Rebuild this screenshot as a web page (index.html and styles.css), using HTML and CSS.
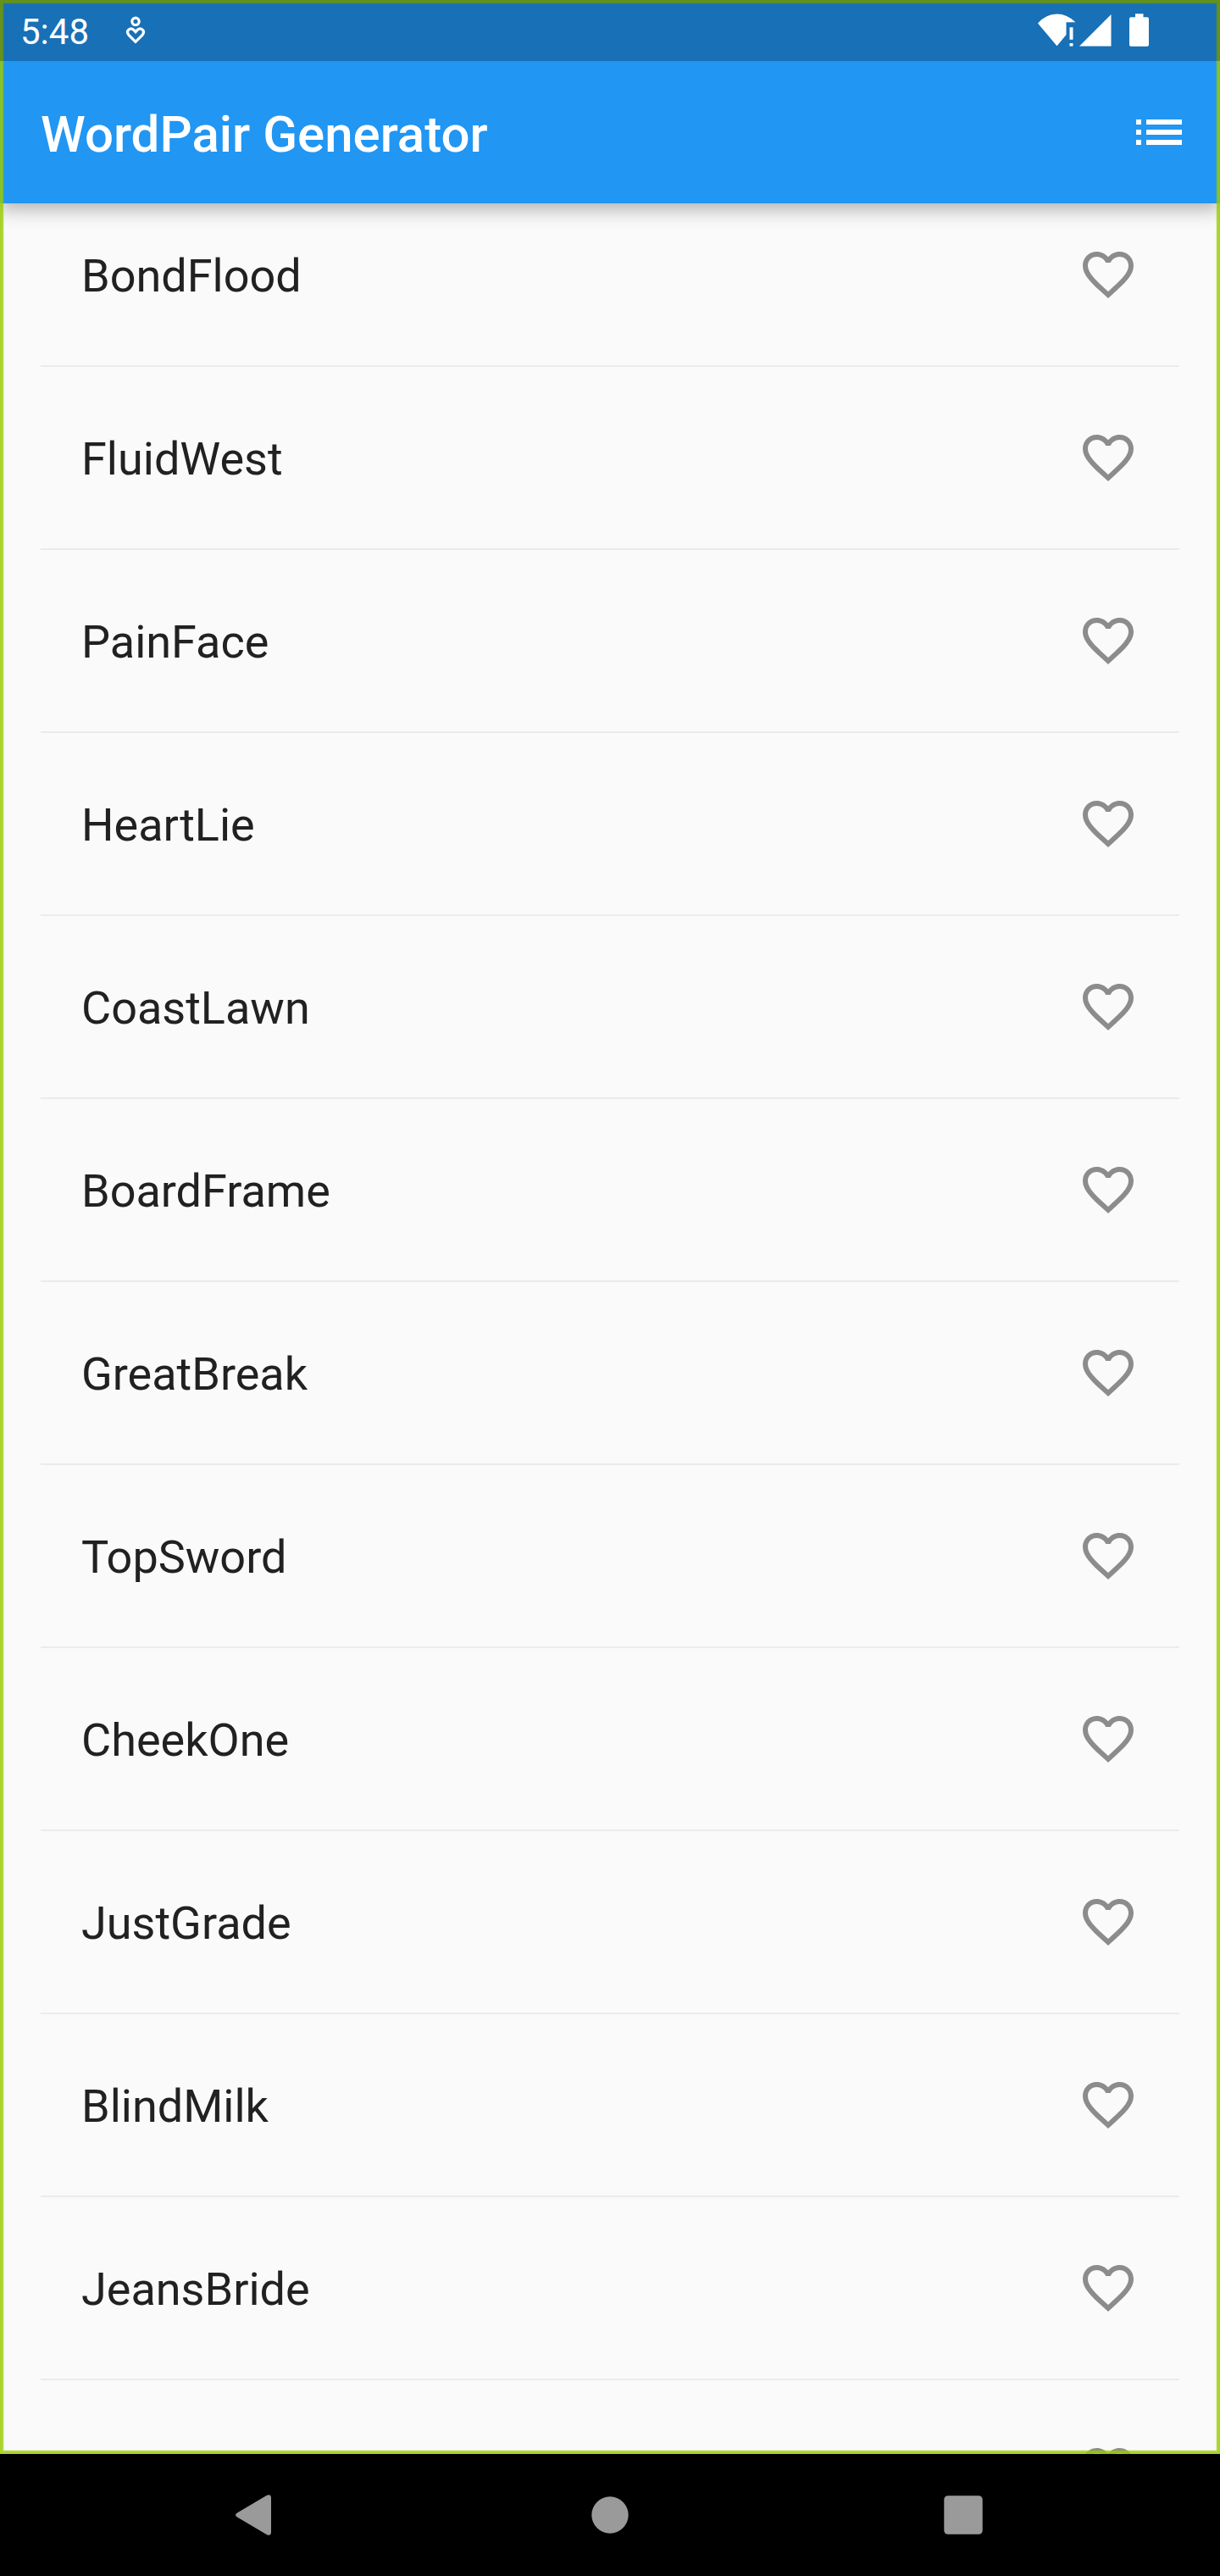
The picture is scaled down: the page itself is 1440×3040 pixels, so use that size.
FILE: index.html
```html
<!DOCTYPE html>
<html lang="en">
<head>
<meta charset="utf-8">
<title>WordPair Generator</title>
<link rel="stylesheet" href="styles.css">
</head>
<body>
<svg class="sprite" aria-hidden="true">
  <symbol id="heart" viewBox="0 0 24 24"><path d="M16.5 3c-1.74 0-3.41.81-4.5 2.09C10.91 3.81 9.24 3 7.5 3 4.42 3 2 5.42 2 8.5c0 3.78 3.4 6.86 8.55 11.54L12 21.35l1.45-1.32C18.6 15.36 22 12.28 22 8.5 22 5.42 19.58 3 16.5 3zm-4.4 15.55l-.1.1-.1-.1C7.14 14.24 4 11.39 4 8.5 4 6.5 5.5 5 7.5 5c1.54 0 3.04.99 3.57 2.36h1.87C13.46 5.99 14.96 5 16.5 5c2 0 3.5 1.5 3.5 3.5 0 2.89-3.14 5.74-7.9 10.05z"/></symbol>
</svg>
<div class="phone">
  <div class="screen">
    <header class="app-header">
      <div class="status-bar">
        <span class="clock">5:48</span>
        <svg class="notice" width="24" height="36" viewBox="0 0 24 36" fill="none" stroke="#fff" stroke-width="3.2"><circle cx="12" cy="7.300" r="4.200"/><path d="M12 31.300L4 23.300C0 18.500 5.500 13.800 9.800 17.300L12 19.600L14.200 17.300C18.500 13.800 24 18.500 20 23.300Z"/></svg>
        <div class="indicators">
          <svg class="wifi" width="45" height="40" viewBox="0 0 45 40" fill="#fff"><path d="M0 11.500Q9.500 .5 22.500 .5Q34.500 .5 44.500 10.300H33.500V25L22.500 38.300Z"/><path d="M37.500 16.300h4v14.400h-4zM37.500 35h4v3.500h-4z"/></svg>
          <svg class="signal" width="38" height="40" viewBox="0 0 38 40" fill="#fff"><path d="M0 38.500L37.500 1V38.500Z"/></svg>
          <svg class="battery" width="23" height="40" viewBox="0 0 23 40" fill="#fff"><path d="M7 .3h9.500v4H21q2 0 2 2V36.700q0 2-2 2H2q-2 0-2-2V6.300q0-2 2-2h5z"/></svg>
        </div>
      </div>
      <div class="app-bar">
        <h1>WordPair Generator</h1>
        <svg width="72" height="72" viewBox="0 0 24 24" fill="#fff"><path d="M3 13h2v-2H3v2zm0 4h2v-2H3v2zm0-8h2V7H3v2zm4 4h14v-2H7v2zm0 4h14v-2H7v2zM7 7v2h14V7H7z"/></svg>
      </div>
    </header>
    <ul class="pairs">
      <li><span>BondFlood</span><svg><use href="#heart"/></svg></li>
      <li><span>FluidWest</span><svg><use href="#heart"/></svg></li>
      <li><span>PainFace</span><svg><use href="#heart"/></svg></li>
      <li><span>HeartLie</span><svg><use href="#heart"/></svg></li>
      <li><span>CoastLawn</span><svg><use href="#heart"/></svg></li>
      <li><span>BoardFrame</span><svg><use href="#heart"/></svg></li>
      <li><span>GreatBreak</span><svg><use href="#heart"/></svg></li>
      <li><span>TopSword</span><svg><use href="#heart"/></svg></li>
      <li><span>CheekOne</span><svg><use href="#heart"/></svg></li>
      <li><span>JustGrade</span><svg><use href="#heart"/></svg></li>
      <li><span>BlindMilk</span><svg><use href="#heart"/></svg></li>
      <li><span>JeansBride</span><svg><use href="#heart"/></svg></li>
      <li><span></span><svg><use href="#heart"/></svg></li>
    </ul>
    <div class="glow"></div>
    <div class="scrim"></div>
  </div>
  <nav class="nav-bar">
    <svg width="46" height="48" viewBox="0 0 46 48"><path d="M2 21.500L37 .8Q42-1.300 42 4V44Q42 49.300 37 47.200L2 26.500Q-2 24 2 21.500Z"/></svg>
    <svg width="46" height="48" viewBox="0 0 46 48"><circle cx="23" cy="24" r="21.700"/></svg>
    <svg width="46" height="48" viewBox="0 0 46 48"><rect x=".3" y="1.300" width="45.400" height="45.400" rx="4.500"/></svg>
  </nav>
</div>
</body>
</html>
```

FILE: styles.css
```css
* { box-sizing: border-box; }
body { margin: 0; font-family: Roboto, "Liberation Sans", sans-serif; }
svg { display: block; flex: none; }
.sprite { position: absolute; width: 0; height: 0; }
.phone { width: 1440px; height: 3040px; display: flex; flex-direction: column; background: #000; overflow: hidden; }
.screen { position: relative; z-index: 0; height: 2896px; overflow: hidden; background: #fafafa; }
.app-header {
  position: relative; height: 240px; color: #fff; background: #2196f3;
  box-shadow: 0 6px 12px -3px rgba(0,0,0,.07), 0 12px 18px rgba(0,0,0,.16), 0 3px 24px rgba(0,0,0,.06);
}
.status-bar { position: relative; z-index: 4; height: 72px; display: flex; align-items: flex-start; padding: 0 84px 0 24px; }
.clock { width: 124px; font-size: 42px; line-height: 49px; padding-top: 13px; }
.notice { margin-top: 18px; }
.indicators { display: flex; margin-left: auto; padding-top: 16px; }
.signal { margin-left: 4px; }
.battery { margin-left: 21px; }
.app-bar { height: 168px; padding: 0 36px 0 48px; display: flex; align-items: center; justify-content: space-between; }
.app-bar h1 { margin: 0; padding-top: 6px; font-size: 60px; line-height: 72px; font-weight: 500; }
.pairs { margin: 0; padding: 0 48px; list-style: none; }
.pairs li {
  height: 216px; padding: 0 48px 48px; display: flex; align-items: center; justify-content: space-between;
  background: linear-gradient(#ebebeb, #ebebeb) 0 191px / 100% 2px no-repeat;
}
.pairs span { padding-top: 4px; font-size: 54px; line-height: 64px; color: #212121; }
.pairs svg { width: 72px; height: 72px; fill: #8c8c8c; }
.glow {
  position: absolute; z-index: 2; inset: 0; pointer-events: none;
  border: 3px solid rgba(153,204,0,.84); box-shadow: inset 0 0 0 1px rgba(153,204,0,.6), inset 0 0 0 2px rgba(153,204,0,.2);
}
.scrim { position: absolute; z-index: 3; inset: 0 0 auto; height: 72px; background: rgba(0,0,0,.25); }
.nav-bar { height: 144px; padding: 0 280px 0 278px; display: flex; align-items: center; justify-content: space-between; fill: #9a9a9a; }
.nav-bar svg:first-child { margin-right: 2px; }
```
